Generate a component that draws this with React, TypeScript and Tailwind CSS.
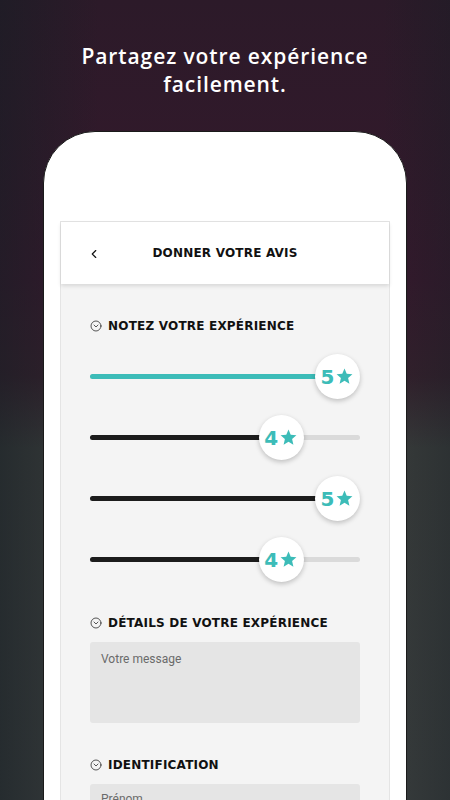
import { ChevronLeft, CircleChevronDown } from "lucide-react";

const ratings = [
  { value: 5, fill: "bg-[#3cbcb8]" },
  { value: 4, fill: "bg-[#1c1c1c]" },
  { value: 5, fill: "bg-[#1c1c1c]" },
  { value: 4, fill: "bg-[#1c1c1c]" },
];

function Star() {
  return (
    <svg viewBox="0 0 24 24" className="h-[19px] w-[19px] fill-[#3cbcb8]">
      <path d="M12 17.27L18.18 21l-1.64-7.03L22 9.24l-7.19-.61L12 2 9.19 8.63 2 9.24l5.46 4.73L5.82 21z" />
    </svg>
  );
}

function SectionTitle({ label }: { label: string }) {
  return (
    <div className="flex items-center gap-[6px] text-[#111]">
      <CircleChevronDown size={12} strokeWidth={1.4} />
      <h2 className="font-['DejaVu_Sans',sans-serif] text-[12px] font-bold leading-4 tracking-[0.2px]">
        {label}
      </h2>
    </div>
  );
}

function Slider({ value, fill }: { value: number; fill: string }) {
  const knob = ((value - 1) / 4) * 225;
  return (
    <div className="relative flex h-[45px] items-center">
      <div className="h-[5px] w-full rounded-full bg-[#dadada]">
        <div
          className={`h-[5px] rounded-full ${fill}`}
          style={{ width: knob + 22 }}
        />
      </div>
      <div
        className="absolute top-0 flex h-[45px] w-[45px] items-center justify-center gap-[1px] rounded-full bg-white shadow-[0_2px_5px_rgba(0,0,0,0.22)]"
        style={{ left: knob }}
      >
        <span className="font-['DejaVu_Sans',sans-serif] text-[20px] font-bold leading-none text-[#3cbcb8]">
          {value}
        </span>
        <Star />
      </div>
    </div>
  );
}

export default function App() {
  return (
    <main className="relative flex h-[800px] w-[450px] flex-col items-center overflow-hidden bg-[linear-gradient(90deg,rgba(22,30,36,0.55)_0%,rgba(22,30,36,0)_22%,rgba(22,30,36,0)_85%,rgba(22,30,36,0.35)_100%),linear-gradient(180deg,#2c1a29_0%,#35192c_35%,#34202c_47%,#393c3b_56%,#393d3d_100%)]">
      {/* HEADLINE */}
      <h1 className="mt-[42px] text-center font-['Open_Sans',sans-serif] text-[21px] font-semibold leading-[28px] tracking-[0.9px] text-white">
        Partagez votre expérience
        <br />
        facilement.
      </h1>

      {/* PHONE */}
      <div className="mt-[33px] flex w-[364px] flex-1 flex-col rounded-t-[52px] border border-[#1a1a1a] bg-white px-[16px] pt-[89px]">
        <div className="flex flex-1 flex-col border-x border-t border-[#e4e4e4] bg-[#f4f4f4]">
          {/* HEADER */}
          <div className="relative flex h-[62px] items-center justify-center bg-white shadow-[0_2px_4px_rgba(0,0,0,0.12)]">
            <ChevronLeft
              size={14}
              strokeWidth={2}
              className="absolute left-[26px] top-[25px] text-[#111]"
            />
            <span className="font-['DejaVu_Sans',sans-serif] text-[12px] font-bold tracking-[0.2px] text-[#111]">
              DONNER VOTRE AVIS
            </span>
          </div>

          {/* CONTENT */}
          <div className="flex flex-col px-[29px] pt-[34px]">
            <SectionTitle label="NOTEZ VOTRE EXPÉRIENCE" />

            <div className="mt-[20px] flex flex-col gap-[16px]">
              {ratings.map((r, i) => (
                <Slider key={i} value={r.value} fill={r.fill} />
              ))}
            </div>

            <div className="mt-[33px]">
              <SectionTitle label="DÉTAILS DE VOTRE EXPÉRIENCE" />
            </div>
            <div className="mt-[11px] h-[81px] rounded-[3px] bg-[#e5e5e5] px-[11px] pt-[8px] font-['Roboto',sans-serif] text-[12px] text-[#6a6a6a]">
              Votre message
            </div>

            <div className="mt-[34px]">
              <SectionTitle label="IDENTIFICATION" />
            </div>
            <div className="mt-[11px] h-[40px] rounded-[3px] bg-[#e5e5e5] px-[11px] pt-[6px] font-['Roboto',sans-serif] text-[12px] text-[#6a6a6a]">
              Prénom
            </div>
          </div>
        </div>
      </div>
    </main>
  );
}
